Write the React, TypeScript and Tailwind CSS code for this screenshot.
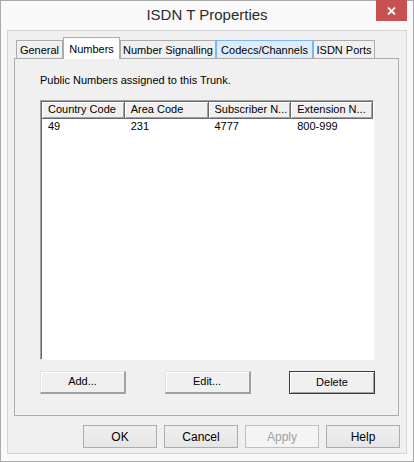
const tabs = [
  { label: "General", w: 47 },
  { label: "Numbers", w: 57, active: true },
  { label: "Number Signalling", w: 96 },
  { label: "Codecs/Channels", w: 97, hot: true },
  { label: "ISDN Ports", w: 62 },
];

const columns = [
  { label: "Country Code", w: 83 },
  { label: "Area Code", w: 84 },
  { label: "Subscriber N...", w: 83 },
  { label: "Extension N...", w: 82 },
];

const rows = [["49", "231", "4777", "800-999"]];

function ClassicButton({ label, isDefault }: { label: string; isDefault?: boolean }) {
  return (
    <button
      type="button"
      className={
        "h-[23px] w-[86px] bg-[#f0f0f0] text-[11px] text-black " +
        (isDefault
          ? "border border-[#3c3c3c] shadow-[inset_1px_1px_0_#fff,inset_-1px_-1px_0_#a0a0a0]"
          : "border-t border-l border-t-[#e3e3e3] border-l-[#e3e3e3] border-b-2 border-r-2 border-b-[#a0a0a0] border-r-[#a0a0a0] shadow-[inset_1px_1px_0_#fff]")
      }
    >
      {label}
    </button>
  );
}

function DialogButton({ label, disabled }: { label: string; disabled?: boolean }) {
  return (
    <button
      type="button"
      disabled={disabled}
      className={
        "h-[23px] w-[74px] border text-[12px] " +
        (disabled
          ? "border-[#bfbfbf] bg-[#f4f4f4] text-[#a0a0a0]"
          : "border-[#acacac] bg-gradient-to-b from-[#f0f0f0] to-[#e5e5e5] text-black")
      }
    >
      {label}
    </button>
  );
}

export default function App() {
  return (
    <div
      className="flex h-[462px] w-[414px] flex-col border border-[#aaaaaa] bg-[#f9f9f9] text-black"
      style={{ fontFamily: '"Liberation Sans", Arial, sans-serif' }}
    >
      {/* title bar */}
      <div className="relative flex h-[29px] shrink-0 items-center justify-center">
        <span className="text-[15px] text-[#2b2b2b]">ISDN T Properties</span>
        <div className="absolute right-[6px] top-[-1px] flex h-[21px] w-[31px] items-center justify-center bg-[#c75050]">
          <svg width="9" height="8" viewBox="0 0 9 8" aria-hidden="true">
            <path d="M1 0.5 8 7.5M8 0.5 1 7.5" stroke="#fff" strokeWidth="1.8" />
          </svg>
        </div>
      </div>

      {/* client area */}
      <div className="mx-[6px] flex h-[424px] flex-col border border-[#d4d4d4] bg-[#f0f0f0] px-[6px] pt-[6px]">
        {/* tab strip */}
        <div className="relative z-10 flex h-[21px] items-end pl-[2px]">
          {tabs.map((t) =>
            t.active ? (
              <div
                key={t.label}
                className="-mb-px flex h-[22px] items-start justify-center border border-b-0 border-[#acacac] bg-white pt-[3px] text-[11px]"
                style={{ width: t.w }}
              >
                {t.label}
              </div>
            ) : (
              <div
                key={t.label}
                className={
                  "flex h-[18px] items-center justify-center border border-b-0 pt-px text-[11px] " +
                  (t.hot ? "border-[#7eb4ea] bg-[#dcecfc]" : "border-[#acacac] bg-[#f0f0f0]")
                }
                style={{ width: t.w }}
              >
                {t.label}
              </div>
            ),
          )}
        </div>

        {/* tab page */}
        <div className="flex h-[358px] w-[385px] flex-col border border-[#acacac] bg-[#f0f0f0] pl-[25px]">
          <p className="mt-[13px] text-[11px]">Public Numbers assigned to this Trunk.</p>

          <div className="mt-[11px] flex h-[260px] w-[334px] flex-col border border-t-[#a0a0a0] border-l-[#a0a0a0] border-b-white border-r-white bg-white shadow-[inset_1px_1px_0_#696969]">
            <div className="ml-[1px] mt-[1px] flex h-[17px] shrink-0">
              {columns.map((c) => (
                <div
                  key={c.label}
                  className="flex items-center border-b border-r border-b-[#696969] border-r-[#696969] bg-[#f0f0f0] pl-[6px] text-[11px] shadow-[inset_1px_1px_0_#fff,inset_-1px_-1px_0_#a0a0a0]"
                  style={{ width: c.w }}
                >
                  {c.label}
                </div>
              ))}
            </div>
            {rows.map((r, i) => (
              <div key={i} className="ml-[1px] flex h-[16px] items-center text-[11px]">
                {r.map((v, j) => (
                  <span key={j} className="pl-[6px]" style={{ width: columns[j].w }}>
                    {v}
                  </span>
                ))}
              </div>
            ))}
          </div>

          <div className="mt-[11px] flex w-[335px] justify-between">
            <ClassicButton label="Add..." />
            <ClassicButton label="Edit..." />
            <ClassicButton label="Delete" isDefault />
          </div>
        </div>

        {/* dialog buttons */}
        <div className="mt-[9px] flex justify-end gap-[7px]">
          <DialogButton label="OK" />
          <DialogButton label="Cancel" />
          <DialogButton label="Apply" disabled />
          <DialogButton label="Help" />
        </div>
      </div>
    </div>
  );
}
